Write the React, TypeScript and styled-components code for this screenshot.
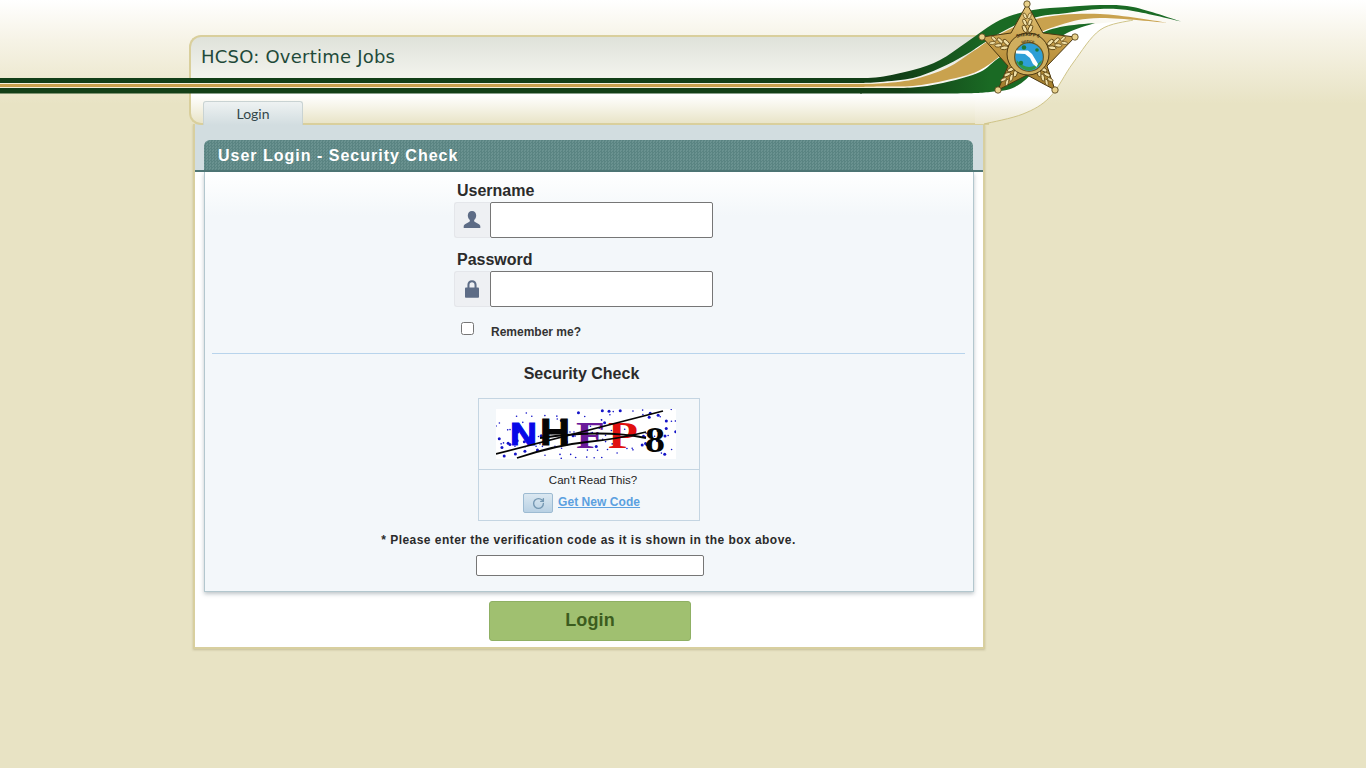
import React from "react";
import styled, { createGlobalStyle } from "styled-components";
import { RotateCw } from "lucide-react";

const GlobalStyle = createGlobalStyle`
  html, body {
    margin: 0;
    padding: 0;
    height: 100%;
  }
  body {
    background: #e8e3c4;
    font-family: "Liberation Sans", Arial, sans-serif;
    color: #2b2b2b;
    overflow: hidden;
  }
`;

const Page = styled.div`
  min-height: 768px;
  background: linear-gradient(#ffffff 0, #f6f3e6 40px, #e8e3c4 104px) no-repeat;
  background-size: 100% 124px;
`;

const Header = styled.header`
  position: relative;
  height: 124px;
  padding: 35px 0 0 189px;
  box-sizing: border-box;
`;

const HeaderShell = styled.div`
  width: 800px;
  height: 90px;
  box-sizing: border-box;
  display: flex;
  flex-direction: column;
  justify-content: space-between;
  border: 2px solid #d9cf9c;
  border-right: none;
  border-radius: 12px 0 0 12px;
  background: linear-gradient(
    #dfe2da 0,
    #f4f4ee 42px,
    #ffffff 58px,
    #f5f3e6 71px,
    #e8e3c6 87px
  );
`;

const SiteTitle = styled.h1`
  margin: 0;
  padding: 9px 0 0 10px;
  font-family: "DejaVu Sans", sans-serif;
  font-size: 18px;
  line-height: 22px;
  font-weight: 400;
  letter-spacing: 0.22px;
  color: #1f4a3a;
`;

const Tab = styled.div`
  width: 100px;
  height: 24px;
  margin: 0 0 -2px 12px;
  box-sizing: border-box;
  text-align: center;
  border: 1px solid #c9d3d3;
  border-bottom: none;
  border-radius: 3px 3px 0 0;
  background: linear-gradient(#eef2f2, #d2dde0);
  font-family: Lato, sans-serif;
  font-size: 14px;
  line-height: 23px;
  color: #33474a;
`;

const Banner = styled.svg`
  position: absolute;
  top: 0;
  left: 0;
  pointer-events: none;
`;

const Main = styled.main`
  width: 792px;
  height: 525px;
  margin-left: 193px;
  box-sizing: border-box;
  background: #fff;
  border: 2px solid #d8cf9f;
  border-top: none;
  box-shadow: 0 1px 2px rgba(120, 110, 60, 0.3);
`;

const PanelHead = styled.div`
  height: 48px;
  box-sizing: border-box;
  padding: 16px 10px 0 9px;
  background: #d2dde0;
  border-bottom: 2px solid #4f7675;
`;

const PanelTitle = styled.h2`
  margin: 0;
  height: 30px;
  padding-left: 14px;
  border-radius: 6px 6px 0 0;
  background: repeating-conic-gradient(#5a8482 0 25%, #6a9290 0 50%) 0 0 / 3px 3px;
  font-size: 16px;
  line-height: 31px;
  font-weight: 700;
  letter-spacing: 1px;
  color: #fff;
`;

const FormBox = styled.div`
  height: 420px;
  margin: 0 9px 0 9px;
  box-sizing: border-box;
  border: 1px solid #b3c7ce;
  border-top: none;
  background: linear-gradient(#ffffff 0, #f3f7fa 44px);
  box-shadow: 0 2px 4px rgba(70, 90, 100, 0.35);
`;

const LoginFields = styled.div`
  width: 259px;
  margin-left: 249px;
  padding-top: 10px;
`;

const FieldLabel = styled.label`
  display: block;
  padding-left: 3px;
  margin-bottom: 2px;
  font-size: 16px;
  line-height: 18px;
  font-weight: 700;
`;

const FieldRow = styled.div`
  display: flex;
  height: 36px;
  margin-bottom: 13px;
`;

const Addon = styled.span`
  width: 36px;
  box-sizing: border-box;
  padding-right: 1px;
  display: flex;
  align-items: center;
  justify-content: center;
  background: #eef0f3;
  border: 1px solid #e4e6ea;
  border-right: none;
  border-radius: 3px 0 0 3px;
`;

const TextField = styled.input`
  flex: 1;
  min-width: 0;
  box-sizing: border-box;
  padding: 0 6px;
  background: #fff;
  border: 1px solid #767676;
  border-radius: 2px;
`;

const RememberRow = styled.div`
  display: flex;
  align-items: flex-start;
  height: 31px;
  margin-top: 15px;
  padding-left: 7px;
`;

const RememberBox = styled.input`
  width: 13px;
  height: 13px;
  margin: 0;
`;

const RememberText = styled.span`
  margin: 3px 0 0 17px;
  font-size: 12px;
  line-height: 14px;
  font-weight: 700;
  color: #333;
`;

const Divider = styled.hr`
  height: 1px;
  margin: 0 8px 0 7px;
  border: none;
  background: #b8d4ec;
`;

const SecurityTitle = styled.h3`
  margin: 11px 0 0;
  padding-right: 15px;
  text-align: center;
  font-size: 16px;
  line-height: 18px;
  font-weight: 700;
`;

const CaptchaBox = styled.div`
  width: 222px;
  height: 123px;
  margin: 15px 0 0 273px;
  box-sizing: border-box;
  border: 1px solid #c4d5e2;
`;

const CaptchaImageRow = styled.div`
  height: 71px;
  box-sizing: border-box;
  padding: 10px 0 0 17px;
  border-bottom: 1px solid #c4d5e2;
`;

const CaptchaImage = styled.svg`
  display: block;
  background: #fff;
`;

const CantRead = styled.div`
  margin-top: 4px;
  padding-left: 8px;
  text-align: center;
  font-size: 11.5px;
  line-height: 13px;
  font-weight: 400;
  color: #222;
`;

const NewCodeRow = styled.div`
  display: flex;
  align-items: flex-start;
  margin: 6px 0 0 44px;
`;

const RefreshButton = styled.button`
  width: 30px;
  height: 20px;
  padding: 0;
  display: flex;
  align-items: center;
  justify-content: center;
  border: 1px solid #9dbbd2;
  border-radius: 2px;
  background: linear-gradient(#dbe8f1, #b9d1e4);
`;

const NewCodeLink = styled.a`
  margin-left: 5px;
  font-size: 12px;
  line-height: 19px;
  font-weight: 700;
  letter-spacing: 0.06px;
  color: #5ba0e0;
  text-decoration: underline;
`;

const Instruction = styled.p`
  margin: 12px 0 0;
  padding-right: 1px;
  text-align: center;
  font-size: 12px;
  line-height: 14px;
  font-weight: 700;
  letter-spacing: 0.47px;
`;

const CodeField = styled.input`
  display: block;
  width: 228px;
  height: 21px;
  margin: 8px 0 0 271px;
  box-sizing: border-box;
  background: #fff;
  border: 1px solid #767676;
  border-radius: 2px;
`;

const ButtonRow = styled.div`
  display: flex;
  justify-content: center;
  padding: 9px 0 0 2px;
`;

const LoginButton = styled.button`
  width: 202px;
  height: 40px;
  padding: 0 0 2px;
  border: 1px solid #8fb064;
  border-radius: 3px;
  background: #a0c070;
  font-family: "Liberation Sans", Arial, sans-serif;
  font-size: 18px;
  font-weight: 700;
  letter-spacing: 0.1px;
  color: #3c5c1e;
`;

const UserIcon = () => (
  <svg width="18" height="18" viewBox="0 0 18 18" fill="#5d6c86">
    <path d="M9 0c2.6 0 4.2 2 4.2 4.6 0 1.8-.8 3.3-1.8 4.2-.4.4-.4 1.500.2 1.900l4.400 2.500c.8.500 1.300 1.200 1.300 2.100V17H.700v-1.700c0-.9.500-1.600 1.300-2.100l4.400-2.500c.6-.4.600-1.500.2-1.900-1-.9-1.800-2.400-1.800-4.200C4.800 2 6.400 0 9 0z" />
  </svg>
);

const LockIcon = () => (
  <svg width="14" height="18" viewBox="0 0 15 19" fill="#5d6c86">
    <path d="M7.500 0C4.500 0 2.600 2 2.600 5v3H1.200C.5 8 0 8.500 0 9.200v8.600c0 .7.500 1.200 1.200 1.200h12.600c.7 0 1.200-.5 1.200-1.200V9.200c0-.7-.5-1.200-1.200-1.200h-1.400V5c0-3-1.900-5-4.900-5zm0 2.200c1.700 0 2.700 1.100 2.700 2.900v2.900H4.800V5.100c0-1.800 1-2.900 2.700-2.900z" />
  </svg>
);

// noise dots of the captcha, seeded so that every render is the same
const captchaDots = (() => {
  const dots: { x: number; y: number; r: number }[] = [];
  let seed = 71;
  const next = () => {
    seed = (seed * 16807) % 2147483647;
    return seed / 2147483647;
  };
  for (let i = 0; i < 120; i++) {
    dots.push({ x: next() * 180, y: next() * 50, r: next() > 0.65 ? 1.5 : 0.8 });
  }
  return dots;
})();

const CaptchaPicture = () => (
  <CaptchaImage width="180" height="50" viewBox="0 0 180 50">
    {captchaDots.map((d, i) => (
      <circle key={i} cx={d.x} cy={d.y} r={d.r} fill="#1414c8" />
    ))}
    <text x="14" y="36" fontFamily="Liberation Sans" fontWeight="700" fontSize="32" fill="#0808e8" stroke="#0808e8" strokeWidth="1" textLength="27" lengthAdjust="spacingAndGlyphs">N</text>
    <text x="44" y="36" fontFamily="Liberation Sans" fontWeight="700" fontSize="37" fill="#050505" stroke="#050505" strokeWidth="1" textLength="30" lengthAdjust="spacingAndGlyphs">H</text>
    <text x="80" y="39" fontFamily="Liberation Serif" fontWeight="700" fontSize="37" fill="#6a1a9a" textLength="29" lengthAdjust="spacingAndGlyphs">F</text>
    <text x="112" y="39" fontFamily="Liberation Serif" fontWeight="700" fontSize="37" fill="#e01010" textLength="30" lengthAdjust="spacingAndGlyphs">P</text>
    <text x="149" y="43" fontFamily="Liberation Serif" fontWeight="700" fontSize="36" fill="#050505" textLength="20" lengthAdjust="spacingAndGlyphs">8</text>
    <g fill="none" stroke="#050505" strokeWidth="1.800">
      <path d="M0 45L167 2" />
      <path d="M21 49Q60 36 91 33T150 23" />
      <path d="M44 29Q107 20 150 29" />
    </g>
  </CaptchaImage>
);

// smooth path through sampled outline points (Catmull-Rom to bezier)
const smoothPath = (pts: number[][]) => {
  let d = `M${pts[0][0]} ${pts[0][1]}`;
  for (let i = 0; i < pts.length - 1; i++) {
    const p0 = pts[Math.max(i - 1, 0)];
    const p1 = pts[i];
    const p2 = pts[i + 1];
    const p3 = pts[Math.min(i + 2, pts.length - 1)];
    const c1 = [p1[0] + (p2[0] - p0[0]) / 6, p1[1] + (p2[1] - p0[1]) / 6];
    const c2 = [p2[0] - (p3[0] - p1[0]) / 6, p2[1] - (p3[1] - p1[1]) / 6];
    d += `C${c1[0]} ${c1[1]} ${c2[0]} ${c2[1]} ${p2[0]} ${p2[1]}`;
  }
  return d;
};

const band = (top: number[][], bottom: number[][]) =>
  smoothPath(top) + smoothPath(bottom).replace(/^M[^C]+/, "") + "Z";

const upperGreen = band(
  [[860, 78], [880, 77], [913, 70], [940, 60], [967, 42], [1000, 20], [1033, 10], [1067, 7], [1100, 5], [1133, 7], [1183, 22]],
  [[1183, 22], [1133, 11], [1100, 9], [1067, 13], [1033, 18], [1000, 33], [967, 54], [940, 68], [913, 78], [880, 82], [860, 83]]
);

const tanBand = band(
  [[860, 84], [880, 83.500], [913, 79.500], [947, 68], [975, 50], [1000, 34], [1040, 18], [1100, 14], [1170, 23]],
  [[1170, 23], [1100, 18], [1060, 25], [1020, 42], [980, 70], [947, 80], [913, 86], [880, 86.500], [860, 87]]
);

const lowerGreen = band(
  [[860, 88], [913, 87.500], [947, 82], [980, 72], [1000, 57], [1033, 37], [1060, 27], [1095, 23]],
  [[1095, 23], [1067, 33], [1050, 47], [1035, 70], [1015, 87], [990, 92], [950, 93.500], [860, 93.500]]
);

const curveEdge = smoothPath([[1133, 20], [1100, 30], [1073, 63], [1050, 97], [1023, 114], [984, 124]]);

const starTips = [
  { x: 1027, y: 4 },
  { x: 1075, y: 37 },
  { x: 1055, y: 90 },
  { x: 998, y: 90 },
  { x: 982, y: 37 },
];

const HeaderBanner = () => (
  <Banner width="1366" height="126" viewBox="0 0 1366 126">
    <defs>
      <linearGradient id="swooshWhite" x1="0" y1="0" x2="0" y2="1">
        <stop offset="0" stopColor="#ffffff" />
        <stop offset="0.72" stopColor="#ffffff" />
        <stop offset="1" stopColor="#ebe6cd" />
      </linearGradient>
      <linearGradient id="swooshGreen" gradientUnits="userSpaceOnUse" x1="900" y1="0" x2="990" y2="0">
        <stop offset="0" stopColor="#123f17" />
        <stop offset="1" stopColor="#1a6a24" />
      </linearGradient>
      <linearGradient id="starGold" x1="0" y1="0" x2="0" y2="1">
        <stop offset="0" stopColor="#e4c67a" />
        <stop offset="0.5" stopColor="#c39a45" />
        <stop offset="1" stopColor="#a27c2b" />
      </linearGradient>
      <path id="ringTop" d="M1014 38.500Q1028 33.500 1042 38.500" />
      <path id="ringInner" d="M1020 43.500Q1028 42 1036 43.500" />
    </defs>

    <path d={`M975 36L1133 20${curveEdge.replace(/^M[^C]+/, "")}L975 124Z`} fill="url(#swooshWhite)" />
    <path d={curveEdge} fill="none" stroke="#cfc488" strokeWidth="1" />

    <rect x="0" y="78" width="862" height="5" fill="#123f17" />
    <rect x="0" y="83" width="930" height="1" fill="#f5f0d8" />
    <rect x="0" y="84" width="862" height="3" fill="#c9a24e" />
    <rect x="0" y="87" width="930" height="1" fill="#f5f0d8" />
    <rect x="0" y="88" width="862" height="5.500" fill="#123f17" />

    <path d={upperGreen} fill="url(#swooshGreen)" />
    <path d={tanBand} fill="#c9a24e" />
    <path d={lowerGreen} fill="url(#swooshGreen)" />

    <path
      d="M1027 4L1043 33L1075 37L1047 66L1055 90L1027 75L998 90L1008 66L982 37L1011 33Z"
      fill="url(#starGold)"
      stroke="#4a3710"
      strokeWidth="1"
      strokeLinejoin="round"
    />
    {starTips.map((tip, i) => {
      const cx = 1028;
      const cy = 53;
      const angle = (Math.atan2(tip.y - cy, tip.x - cx) * 180) / Math.PI;
      return (
        <g key={i}>
          {[0.52, 0.65, 0.78].map((t) => {
            const x = cx + (tip.x - cx) * t;
            const y = cy + (tip.y - cy) * t;
            const grow = 1.25 - (t - 0.52);
            return (
              <g key={t} transform={`translate(${x} ${y}) rotate(${angle}) scale(${grow})`}>
                <ellipse cx="0" cy="-2.500" rx="3.200" ry="1.500" fill="#f0dfa6" stroke="#5c4412" strokeWidth="0.700" transform="rotate(-25)" />
                <ellipse cx="0" cy="2.500" rx="3.200" ry="1.500" fill="#f0dfa6" stroke="#5c4412" strokeWidth="0.700" transform="rotate(25)" />
              </g>
            );
          })}
          <circle cx={tip.x} cy={tip.y} r="3.200" fill="#e8d18c" stroke="#4a3710" strokeWidth="0.800" />
        </g>
      );
    })}
    <circle cx="1028" cy="54" r="21" fill="#cfae5e" stroke="#4a3710" strokeWidth="1" />
    <circle cx="1029" cy="57" r="15" fill="#6c5a22" />
    <circle cx="1029" cy="57" r="13.800" fill="#2e9fd6" />
    <path d="M1016.500 60Q1029 74 1042 60L1041 63Q1035 70.500 1029 70.500Q1022 70.500 1017 63Z" fill="#2f9a48" />
    <circle cx="1021" cy="63" r="2.200" fill="#1e7a35" />
    <circle cx="1024" cy="47.500" r="2.200" fill="#1e7a35" />
    <circle cx="1037" cy="50" r="1.800" fill="#1e7a35" />
    <path d="M1016 50.500L1028 50.500L1032 54L1038 64L1036.500 67L1033 64L1030 58L1025 54L1016 53.500Z" fill="#ffffff" />
    <text fontFamily="Liberation Sans" fontSize="4.500" fontWeight="700" fill="#2a220c">
      <textPath href="#ringTop" startOffset="50%" textAnchor="middle">SHERIFF'S</textPath>
    </text>
    <text fontFamily="Liberation Sans" fontSize="3.500" fontWeight="700" fill="#2a220c">
      <textPath href="#ringInner" startOffset="50%" textAnchor="middle">OFFICE</textPath>
    </text>
  </Banner>
);

export default function App() {
  return (
    <Page>
      <GlobalStyle />
      <Header>
        <HeaderShell>
          <SiteTitle>HCSO: Overtime Jobs</SiteTitle>
          <Tab>Login</Tab>
        </HeaderShell>
        <HeaderBanner />
      </Header>
      <Main>
        <PanelHead>
          <PanelTitle>User Login - Security Check</PanelTitle>
        </PanelHead>
        <FormBox>
          <LoginFields>
            <FieldLabel htmlFor="username">Username</FieldLabel>
            <FieldRow>
              <Addon>
                <UserIcon />
              </Addon>
              <TextField id="username" type="text" />
            </FieldRow>
            <FieldLabel htmlFor="password">Password</FieldLabel>
            <FieldRow>
              <Addon>
                <LockIcon />
              </Addon>
              <TextField id="password" type="password" />
            </FieldRow>
            <RememberRow>
              <RememberBox type="checkbox" />
              <RememberText>Remember me?</RememberText>
            </RememberRow>
          </LoginFields>
          <Divider />
          <SecurityTitle>Security Check</SecurityTitle>
          <CaptchaBox>
            <CaptchaImageRow>
              <CaptchaPicture />
            </CaptchaImageRow>
            <CantRead>Can't Read This?</CantRead>
            <NewCodeRow>
              <RefreshButton type="button">
                <RotateCw size={13} color="#7497b2" strokeWidth={2.5} />
              </RefreshButton>
              <NewCodeLink href="#">Get New Code</NewCodeLink>
            </NewCodeRow>
          </CaptchaBox>
          <Instruction>* Please enter the verification code as it is shown in the box above.</Instruction>
          <CodeField type="text" />
        </FormBox>
        <ButtonRow>
          <LoginButton type="button">Login</LoginButton>
        </ButtonRow>
      </Main>
    </Page>
  );
}
